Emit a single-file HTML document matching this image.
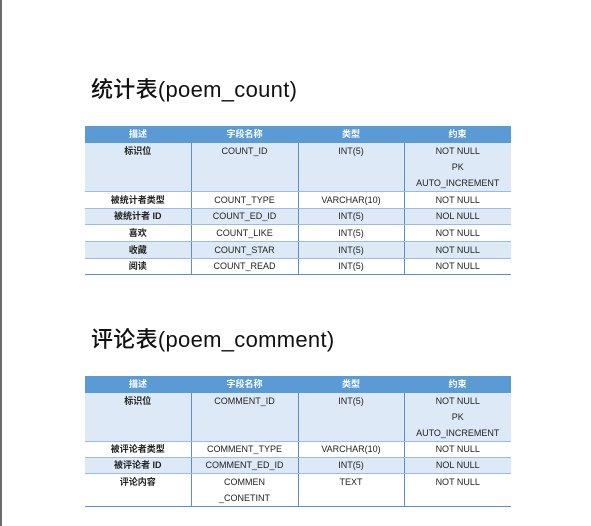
<!DOCTYPE html>
<html><head><meta charset="utf-8"><style>
body{margin:0;width:591px;height:526px;background:#fff;position:relative;overflow:hidden;font-family:"Liberation Sans","Noto Sans CJK SC",sans-serif;}
.lb{position:absolute;left:0;top:0;width:2px;height:526px;background:#6a6a6a}
h1{position:absolute;left:91px;margin:0;font-size:22px;font-weight:500;color:#111;line-height:26px;white-space:nowrap;letter-spacing:0.3px}
table{position:absolute;left:85px;width:426px;border-collapse:collapse;font-size:9px;color:#222;table-layout:fixed}
td,th{text-align:center;vertical-align:top;padding:0;line-height:16px;border-left:1px solid #5b8fc9;box-sizing:border-box}
td:first-child,th:first-child{border-left:none}
th{background:#5b9bd5;color:#fff;font-weight:bold;height:17px;line-height:17px;border-left:none}
td:first-child{font-weight:bold}
tr.b td{background:#dde9f6}
tr td{border-bottom:1px solid #9bbbe0}
tr:last-child td{border-bottom:1px solid #5b8fc9}
tr.s td{line-height:15px}
</style></head><body>
<div class="lb"></div>
<h1 style="top:77px">统计表(poem_count)</h1>
<table style="top:126px">
<colgroup><col style="width:106px"><col style="width:107px"><col style="width:106px"><col style="width:107px"></colgroup>
<tr><th>描述</th><th>字段名称</th><th>类型</th><th>约束</th></tr>
<tr class="b"><td style="height:46px">标识位</td><td>COUNT_ID</td><td>INT(5)</td><td>NOT NULL<br>PK<br>AUTO_INCREMENT</td></tr>
<tr><td>被统计者类型</td><td>COUNT_TYPE</td><td>VARCHAR(10)</td><td>NOT NULL</td></tr>
<tr class="b s"><td>被统计者 ID</td><td>COUNT_ED_ID</td><td>INT(5)</td><td>NOL NULL</td></tr>
<tr><td>喜欢</td><td>COUNT_LIKE</td><td>INT(5)</td><td>NOT NULL</td></tr>
<tr class="b"><td>收藏</td><td>COUNT_STAR</td><td>INT(5)</td><td>NOT NULL</td></tr>
<tr class="s"><td>阅读</td><td>COUNT_READ</td><td>INT(5)</td><td>NOT NULL</td></tr>
</table>
<h1 style="top:327px">评论表(poem_comment)</h1>
<table style="top:376px">
<colgroup><col style="width:106px"><col style="width:107px"><col style="width:106px"><col style="width:107px"></colgroup>
<tr><th>描述</th><th>字段名称</th><th>类型</th><th>约束</th></tr>
<tr class="b"><td style="height:47px">标识位</td><td>COMMENT_ID</td><td>INT(5)</td><td>NOT NULL<br>PK<br>AUTO_INCREMENT</td></tr>
<tr class="s"><td>被评论者类型</td><td>COMMENT_TYPE</td><td>VARCHAR(10)</td><td>NOT NULL</td></tr>
<tr class="b s"><td>被评论者 ID</td><td>COMMENT_ED_ID</td><td>INT(5)</td><td>NOL NULL</td></tr>
<tr><td style="height:33px">评论内容</td><td>COMMEN<br>_CONETINT</td><td>TEXT</td><td>NOT NULL</td></tr>
</table>
</body></html>
